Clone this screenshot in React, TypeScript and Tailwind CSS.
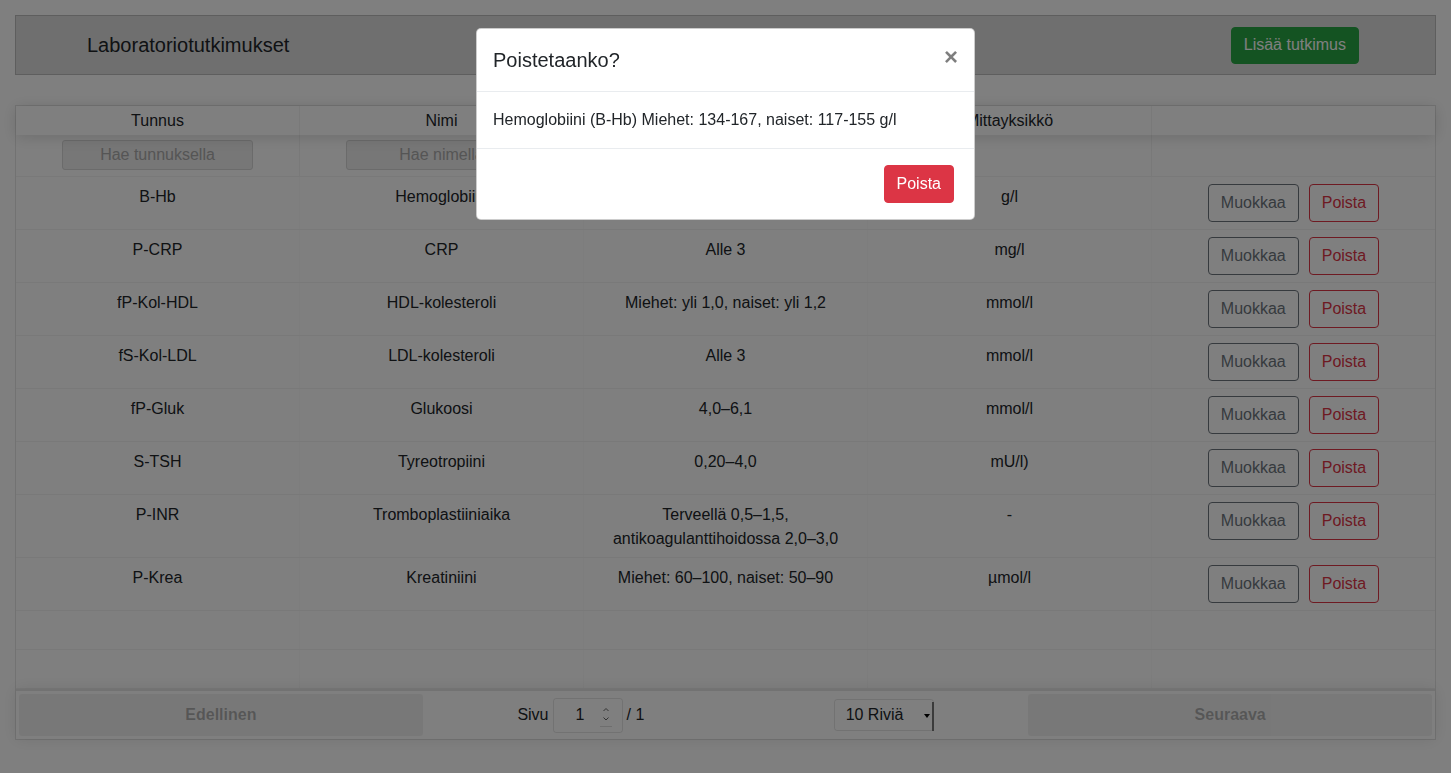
import React from "react";

type Test = {
  code: string;
  name: string;
  range: string;
  unit: string;
};

const tests: Test[] = [
  { code: "B-Hb", name: "Hemoglobiini", range: "Miehet: 134-167, naiset: 117-155", unit: "g/l" },
  { code: "P-CRP", name: "CRP", range: "Alle 3", unit: "mg/l" },
  { code: "fP-Kol-HDL", name: "HDL-kolesteroli", range: "Miehet: yli 1,0, naiset: yli 1,2", unit: "mmol/l" },
  { code: "fS-Kol-LDL", name: "LDL-kolesteroli", range: "Alle 3", unit: "mmol/l" },
  { code: "fP-Gluk", name: "Glukoosi", range: "4,0–6,1", unit: "mmol/l" },
  { code: "S-TSH", name: "Tyreotropiini", range: "0,20–4,0", unit: "mU/l)" },
  { code: "P-INR", name: "Tromboplastiiniaika", range: "Terveellä 0,5–1,5, antikoagulanttihoidossa 2,0–3,0", unit: "-" },
  { code: "P-Krea", name: "Kreatiniini", range: "Miehet: 60–100, naiset: 50–90", unit: "µmol/l" },
];

const cell = "flex-1 min-w-0 px-[5px] py-[7px] text-center leading-6 border-r border-black/[0.02] last:border-r-0";
const textCell = "flex-1 min-w-0 px-[5px] pt-[8px] pb-[6px] text-center leading-6 border-r border-black/[0.02]";

const FilterInput = ({ placeholder }: { placeholder: string }) => (
  <input
    readOnly
    placeholder={placeholder}
    className="block mx-auto w-[191px] h-[30px] px-[7px] rounded-[3px] border border-[#d6d6d6] bg-[#eeeeee] text-center text-base placeholder:text-[#aaaaaa] outline-none"
  />
);

const TestRow = ({ t }: { t: Test }) => (
  <div className="flex border-b border-black/5">
    <div className={textCell}>{t.code}</div>
    <div className={textCell}>{t.name}</div>
    <div className={textCell}>{t.range}</div>
    <div className={textCell}>{t.unit}</div>
    <div className={cell}>
      <div className="flex justify-center gap-[10px]">
        <button className="h-[38px] px-3 rounded border border-[#6c757d] text-[#6c757d] leading-6">Muokkaa</button>
        <button className="h-[38px] px-3 rounded border border-[#dc3545] text-[#dc3545] leading-6">Poista</button>
      </div>
    </div>
  </div>
);

const PadRow = () => (
  <div className="flex border-b border-black/5">
    {[0, 1, 2, 3, 4].map((i) => (
      <div key={i} className={cell}>&nbsp;</div>
    ))}
  </div>
);

const DeleteModal = ({ t }: { t: Test }) => (
  <div className="fixed inset-0 z-20 flex justify-center items-start pt-[28px]">
    <div className="w-[499px] bg-white border border-black/20 rounded-[5px] text-[#212529]">
      <div className="flex items-start justify-between p-4 border-b border-[#e9ecef]">
        <h5 className="text-[20px] leading-[30px]">Poistetaanko?</h5>
        <button className="-m-4 p-4 text-[24px] leading-none font-bold text-black opacity-50">×</button>
      </div>
      <div className="p-4 leading-6">
        {t.name} ({t.code}) {t.range} {t.unit}
      </div>
      <div className="flex justify-end py-4 pl-4 pr-5 border-t border-[#e9ecef]">
        <button className="h-[38px] px-3 rounded border border-[#dc3545] bg-[#dc3545] text-white leading-6">Poista</button>
      </div>
    </div>
  </div>
);

export default function App() {
  return (
    <div className="relative min-h-screen bg-white p-[15px] text-base text-[#212529] font-['Liberation_Sans',Arial,sans-serif]">
      <div className="flex items-center justify-between h-[60px] pl-[71px] pr-[76px] border border-[#bdbdbd] bg-[#dfdfdf]">
        <h2 className="text-[20px]">Laboratoriotutkimukset</h2>
        <button className="h-[37px] px-3 rounded border border-[#28a745] bg-[#28a745] text-white leading-6">Lisää tutkimus</button>
      </div>

      <div className="mt-[30px] flex flex-col border border-black/10">
        <div className="relative z-[1] flex h-[29px] shadow-[0_2px_15px_0_rgba(0,0,0,0.15)]">
          {["Tunnus", "Nimi", "Viitearvot", "Mittayksikkö", ""].map((h, i) => (
            <div key={i} className="flex-1 px-[5px] pt-[3px] text-center leading-6 border-r border-black/5 last:border-r-0">
              {h}
            </div>
          ))}
        </div>
        <div className="flex h-[42px] border-b border-black/5">
          <div className="flex-1 py-[5px] border-r border-black/5">
            <FilterInput placeholder="Hae tunnuksella" />
          </div>
          <div className="flex-1 py-[5px] border-r border-black/5">
            <FilterInput placeholder="Hae nimellä" />
          </div>
          <div className="flex-1 py-[5px] border-r border-black/5" />
          <div className="flex-1 py-[5px] border-r border-black/5" />
          <div className="flex-1 py-[5px]" />
        </div>

        {tests.map((t) => (
          <TestRow key={t.code} t={t} />
        ))}
        <PadRow />
        <PadRow />

        <div className="flex h-[50px] p-[3px] border-t-2 border-black/10 shadow-[0_0_15px_0_rgba(0,0,0,0.1)]">
          <div className="flex-1">
            <button className="w-full h-full rounded-[3px] bg-black/10 font-bold text-black/60 opacity-50">Edellinen</button>
          </div>
          <div className="flex-[1.5] flex items-center justify-around">
            <div className="flex items-center gap-[4px]">
              <span>Sivu</span>
              <div className="relative">
                <input
                  type="text"
                  readOnly
                  value="1"
                  className="block w-[70px] h-[35px] pl-[7px] pr-[22px] rounded-[3px] border border-black/10 text-center outline-none"
                />
                <svg className="absolute left-[47px] top-[8px]" width="12" height="22" viewBox="0 0 12 22" fill="none">
                  <path d="M3.5 5 L6 2.5 L8.5 5" stroke="#666" strokeWidth="1" />
                  <path d="M3.5 11.5 L6 14 L8.5 11.5" stroke="#666" strokeWidth="1" />
                  <path d="M0 20.5 H12" stroke="#ddd" strokeWidth="1" />
                </svg>
              </div>
              <span>/ 1</span>
            </div>
            <div className="relative flex items-center w-[100px] h-[32px] pl-[11px] rounded-[3px] border border-black/10">
              <span>10 Riviä</span>
              <span className="absolute right-[3px] top-[14px] w-0 h-0 border-l-[3px] border-r-[3px] border-t-[4px] border-l-transparent border-r-transparent border-t-black" />
              <span className="absolute -right-px top-[2px] bottom-[-1px] w-[2px] bg-[#777]" />
            </div>
          </div>
          <div className="flex-1">
            <button className="w-full h-full rounded-[3px] bg-black/10 font-bold text-black/60 opacity-50">Seuraava</button>
          </div>
        </div>
      </div>

      <div className="fixed inset-0 z-10 bg-black/50" />
      <DeleteModal t={tests[0]} />
    </div>
  );
}
